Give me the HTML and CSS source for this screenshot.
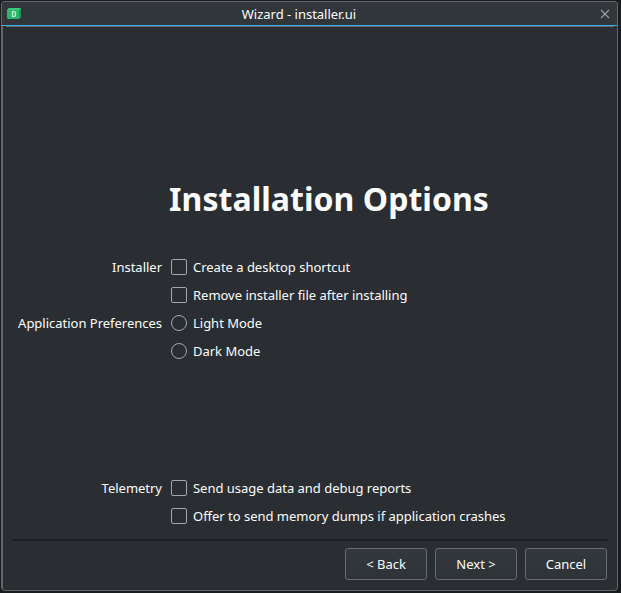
FILE: index.html
```html
<!DOCTYPE html>
<html lang="en">
<head>
<meta charset="utf-8">
<title>Wizard - installer.ui</title>
<link rel="stylesheet" href="styles.css">
</head>
<body>
<div class="window">
  <header class="titlebar">
    <svg class="logo" width="14" height="12" viewBox="0 0 14 12"><path d="M2 0h12v9l-2 2H1L0 10V2z" fill="#2fb56c"/><path d="M2 0h12l-2 2H0z" fill="#3cc67c"/><path d="M12 2l2-2v9l-2 2z" fill="#219653"/><path d="M5.5 3.5v5h1.2q1.8 0 1.8-2v-1q0-2-1.8-2z" fill="none" stroke="#c0f0d5" stroke-width="1.2"/></svg>
    <h1 class="caption">Wizard - installer.ui</h1>
    <svg class="close" width="10" height="10" viewBox="0 0 10 10"><path d="M1 1l8 8M9 1l-8 8" stroke="#9b9ea0" stroke-width="1.1"/></svg>
  </header>
  <main class="page">
    <h2 class="heading">Installation Options</h2>
    <form class="options">
      <span class="label">Installer</span>
      <label class="option"><i class="box"></i>Create a desktop shortcut</label>
      <span></span>
      <label class="option"><i class="box"></i>Remove installer file after installing</label>
      <span class="label">Application Preferences</span>
      <label class="option"><i class="box radio"></i>Light Mode</label>
      <span></span>
      <label class="option"><i class="box radio"></i>Dark Mode</label>
    </form>
    <form class="options telemetry">
      <span class="label">Telemetry</span>
      <label class="option"><i class="box"></i>Send usage data and debug reports</label>
      <span></span>
      <label class="option"><i class="box"></i>Offer to send memory dumps if application crashes</label>
    </form>
    <footer class="actions">
      <button class="button">&lt; Back</button>
      <button class="button">Next &gt;</button>
      <button class="button">Cancel</button>
    </footer>
  </main>
</div>
</body>
</html>
```
FILE: styles.css
```css
* { box-sizing: border-box; }
body {
  margin: 0;
  height: 593px;
  padding: 1px 3px 2px 1px;
  overflow: hidden;
  background: #1b1c1f;
  color: #fcfcfc;
  font: 13px/20px "Noto Sans", sans-serif;
  letter-spacing: -0.015px;
}
.window {
  height: 590px;
  border: 1px solid #646669;
  border-radius: 3px 3px 4px 4px;
  background: #2a2e32;
  overflow: hidden;
}
.titlebar {
  display: flex;
  align-items: center;
  height: 24px;
  padding: 0 7px 0 5px;
  background: #31363b;
  border-bottom: 1px solid #3daee9;
}
.logo { flex: none; margin-top: 1px; }
.caption {
  flex: 1;
  margin: 1px 0 0;
  padding-right: 23px;
  font-size: 13px;
  font-weight: 400;
  line-height: 20px;
  text-align: center;
}
.close { flex: none; margin-top: 1px; }
.page {
  height: 564px;
  border-left: 1px solid #646669;
}
.page::before {
  content: "";
  display: block;
  height: 1px;
  margin: 0 3px;
  background: #646669;
}
.heading {
  margin: 148px 0 0 38px;
  font-size: 32px;
  font-weight: 700;
  line-height: 48px;
  letter-spacing: 0.04px;
  text-align: center;
}
.options {
  display: grid;
  grid-template-columns: 159px 1fr;
  grid-auto-rows: 20px;
  gap: 8px 9px;
  margin-top: 34px;
}
.telemetry { margin-top: 117px; }
.label { text-align: right; white-space: nowrap; }
.option { display: flex; align-items: center; gap: 6px; }
.box {
  width: 16px;
  height: 16px;
  border: 1px solid #a6a9ab;
  border-radius: 2px;
}
.radio { border-radius: 50%; }
.actions {
  display: flex;
  justify-content: flex-end;
  gap: 8px;
  margin: 13px 9px 0;
  padding: 7px 1px 0;
  border-top: 2px solid #1d2023;
}
.button {
  width: 82px;
  height: 32px;
  padding: 0;
  border: 1px solid #6a6d70;
  border-radius: 3px;
  background: linear-gradient(#33383c, #2e3337);
  color: #fcfcfc;
  font: inherit;
}
```
